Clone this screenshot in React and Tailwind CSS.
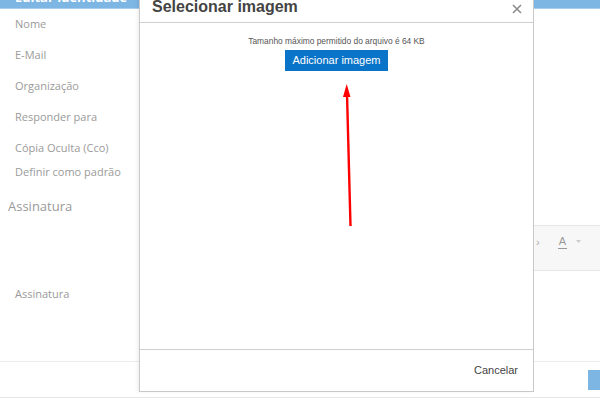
import React from "react";

const labels = ["Nome", "E-Mail", "Organização", "Responder para"];

export default function App() {
  return (
    <div className="relative w-[600px] h-[402px] overflow-hidden bg-white font-['Open_Sans',sans-serif]">
      {/* Underlying dialog: Editar identidade */}
      <div className="flex flex-col">
        <div className="h-[30px] -mt-[21px] bg-[#7db5e3] border-b border-[#a9cdec] flex items-end px-[15px] pb-[4px]">
          <span className="text-[13px] leading-[14px] font-bold text-white">Editar identidade</span>
        </div>

        <div className="flex h-[352px]">
          {/* Left form */}
          <div className="w-[139px] flex flex-col text-[#9a9a9a]">
            {labels.map((l) => (
              <div key={l} className="h-[31px] flex items-center pl-[15px] text-[11px]">
                {l}
              </div>
            ))}
            <div className="h-[30px] flex items-center pl-[15px] text-[11px]">Cópia Oculta (Cco)</div>
            <div className="h-[18px] flex items-center pl-[15px] text-[11px]">Definir como padrão</div>
            <div className="mt-[16px] h-[20px] flex items-center pl-[8px] text-[13px]">Assinatura</div>
            <div className="mt-[67px] h-[20px] flex items-center pl-[15px] text-[11px]">Assinatura</div>
          </div>

          {/* Right: editor */}
          <div className="flex-1 flex flex-col">
            <div className="mt-[216px] h-[46px] bg-[#f7f7f7] border-y border-[#e6e6e6] flex items-start justify-end pr-[19px] pt-[9px] gap-[18px] text-[#aaa]">
              <span className="text-[11px] leading-[14px] font-['Liberation_Sans',sans-serif]">›</span>
              <div className="flex items-start gap-[9px]">
                <span className="text-[11px] leading-[13px] text-[#999] border-b border-[#999] px-[1px] font-['Liberation_Sans',sans-serif]">A</span>
                <svg width="5" height="3" viewBox="0 0 5 3" className="mt-[5px]">
                  <path d="M0 0 L5 0 L2.5 3 Z" fill="#ccc" />
                </svg>
              </div>
            </div>
          </div>
        </div>

        {/* Footer */}
        <div className="h-[36px] border-t border-[#ececec] flex items-center justify-end">
          <div className="w-[12px] h-[20px] bg-[#7db5e3]" />
        </div>
        <div className="border-t border-[#e6e6e6]" />
      </div>

      {/* Modal: Selecionar imagem */}
      <div className="absolute left-[139px] top-[-12px] w-[395px] h-[404px] bg-white border border-[#c9c9c9] shadow-[-2px_0_3px_rgba(0,0,0,0.06)] flex flex-col font-['Liberation_Sans',Arial,sans-serif]">
        <div className="h-[34px] border-b border-[#cfcfcf] flex items-start justify-between pl-[12px] pr-[11px] pt-[8px]">
          <h3 className="text-[16px] leading-[20px] font-bold text-[#444]">Selecionar imagem</h3>
          <svg width="10" height="10" viewBox="0 0 10 10" className="mt-[7px]">
            <path d="M1 1 L9 9 M9 1 L1 9" stroke="#8c8c8c" strokeWidth="1.6" />
          </svg>
        </div>

        <div className="flex-1 flex flex-col items-center pt-[12px]">
          <p className="text-[8.4px] leading-[12px] text-[#555]">Tamanho máximo permitido do arquivo é 64 KB</p>
          <button className="mt-[3px] w-[103px] h-[21px] bg-[#0a74c9] text-white text-[11px] leading-[21px]">
            Adicionar imagem
          </button>
        </div>

        <div className="h-[42px] border-t border-[#cfcfcf] flex items-center justify-end pr-[15px]">
          <span className="text-[11px] text-[#444]">Cancelar</span>
        </div>
      </div>

      {/* Red annotation arrow */}
      <svg className="absolute left-0 top-0 pointer-events-none" width="600" height="402">
        <line x1="350.5" y1="226" x2="347" y2="94" stroke="#f00" strokeWidth="2.4" />
        <path d="M346.7 84 L343 97 L350.5 97 Z" fill="#f00" />
      </svg>
    </div>
  );
}
